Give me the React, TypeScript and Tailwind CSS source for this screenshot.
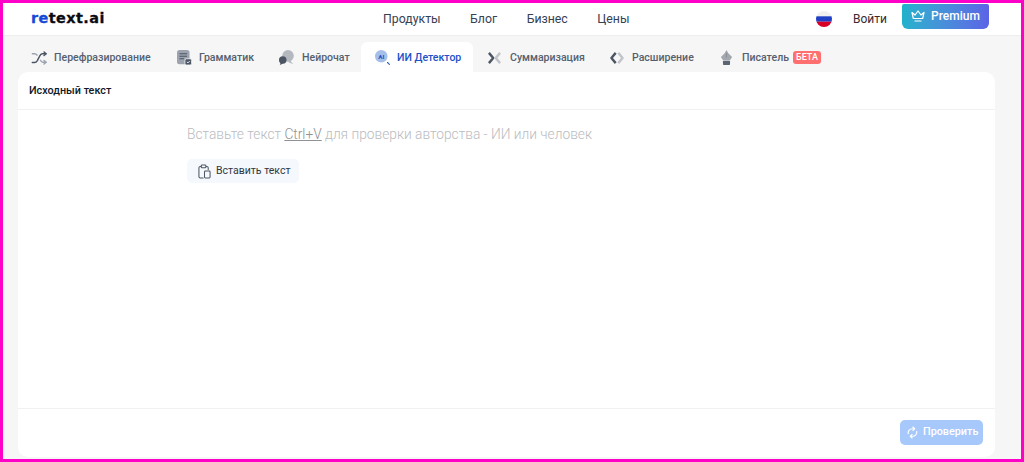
import React from "react";

const Shuffle = () => (
  <svg width="17" height="14" viewBox="0 0 26 20" fill="none" strokeWidth="2.200" strokeLinecap="round" strokeLinejoin="round">
    <path d="M2 17h3.500c2 0 3-1 4.200-3L13 7.500C14.200 4.800 15.500 3.500 17.500 3.500H23" stroke="#4b5563" />
    <path d="M20 .8 23 3.500l-3 2.700" stroke="#4b5563" />
    <path d="M2 3.500h3.500c1.700 0 2.800.8 3.800 2.200M14.500 13.500c1 2 2 3 3.700 3H23" stroke="#9ca3af" />
    <path d="M20 13.800 23 16.500l-3 2.700" stroke="#9ca3af" />
  </svg>
);
const Doc = () => (
  <svg width="15" height="15" viewBox="0 0 18 18">
    <rect x="0" y="0" width="15" height="17" rx="3" fill="#9ca3af" />
    <path d="M3 4.500h9M3 7.500h9M3 10.500h5.500" stroke="#4b5563" strokeWidth="1.300" />
    <rect x="9.500" y="10.500" width="8" height="7.500" rx="1.800" fill="#4b5563" stroke="#f5f5f6" />
    <path d="m11.800 14.200 1.400 1.300 2.200-2.400" stroke="#fff" strokeWidth="1" fill="none" />
  </svg>
);
const Chat = () => (
  <svg width="15" height="15" viewBox="0 0 18 18">
    <circle cx="10.800" cy="7" r="7" fill="#b4b8bf" />
    <path d="M13 12l4 5-6-2.500z" fill="#b4b8bf" />
    <circle cx="4.500" cy="12" r="4.500" fill="#4b5563" />
    <path d="M2 15l-1 3 4-1.700z" fill="#4b5563" />
  </svg>
);
const AiIcon = () => (
  <svg width="15" height="15" viewBox="0 0 18 18">
    <circle cx="7.500" cy="7.500" r="7.500" fill="#a5bfea" />
    <path d="m15 15 2.300 2.300" stroke="#2563c9" strokeWidth="1.300" strokeLinecap="round" />
    <text x="7.500" y="10.200" textAnchor="middle" fontSize="7.500" fontWeight="700" fill="#1d4fc0" fontFamily="Roboto, sans-serif">AI</text>
  </svg>
);
const Collapse = () => (
  <svg width="15" height="12" viewBox="0 0 16 14" fill="none" strokeWidth="2.800" strokeLinejoin="round">
    <path d="m1.500 1 5 6-5 6" stroke="#4b5563" />
    <path d="m14.500 1-5 6 5 6" stroke="#c1c4c9" />
  </svg>
);
const Expand = () => (
  <svg width="16" height="12" viewBox="0 0 16 14" fill="none" strokeWidth="2.800" strokeLinejoin="round">
    <path d="M6.500 1 1.500 7l5 6" stroke="#4b5563" />
    <path d="m9.500 1 5 6-5 6" stroke="#c1c4c9" />
  </svg>
);
const Pen = () => (
  <svg width="13" height="15" viewBox="0 0 14 16">
    <path d="M7 0 9 3.500 13 7.500 10.800 11H3.200L1 7.500 5 3.500z" fill="#a3a7ae" />
    <path d="M7 3v5" stroke="#7d828a" strokeWidth=".7" />
    <rect x="3.200" y="11.500" width="7.600" height="4.500" rx=".8" fill="#5b6470" />
  </svg>
);
const Flag = () => (
  <svg width="16" height="16" viewBox="0 0 16 16">
    <clipPath id="flagClip"><circle cx="8" cy="8" r="8" /></clipPath>
    <g clipPath="url(#flagClip)">
      <rect width="16" height="5.500" fill="#f0f0f0" />
      <rect y="5.300" width="16" height="5.400" fill="#1f3fc4" />
      <rect y="10.700" width="16" height="5.300" fill="#d80027" />
    </g>
  </svg>
);
const Crown = () => (
  <svg width="14" height="12" viewBox="0 0 14 12" fill="none" stroke="#fff" strokeWidth="1.200" strokeLinejoin="round" strokeLinecap="round">
    <path d="M1 2.500 4 5 7 1l3 4 3-2.500-1.300 6H2.300z" />
    <path d="M4 11h6" />
  </svg>
);
const Clip = () => (
  <svg width="13" height="15" viewBox="0 0 14 16" fill="none" stroke="#4b5563" strokeWidth="1.100" strokeLinejoin="round">
    <path d="M3.500 2.500H2.500A1.500 1.500 0 0 0 1 4v9.500A1.500 1.500 0 0 0 2.500 15H6" />
    <path d="M8.500 2.500h1A1.500 1.500 0 0 1 11 4v2.500" />
    <rect x="3.500" y="1" width="5" height="3" rx=".8" />
    <rect x="7" y="7.500" width="6" height="7.500" rx="1" />
  </svg>
);
const Refresh = () => (
  <svg width="11" height="13" viewBox="0 0 14 16" fill="none" stroke="#fff" strokeWidth="1.500" strokeLinecap="round" strokeLinejoin="round">
    <path d="M1.500 9.500A5.500 5.500 0 0 1 7 3.200h2" />
    <path d="M12.500 6.500A5.500 5.500 0 0 1 7 12.800H5" />
    <path d="M7.500 1 9.800 3.200 7.500 5.400M6.500 10.600 4.200 12.800 6.500 15" />
  </svg>
);

type T = { label: string; icon: React.ReactNode; cls: string; badge?: boolean };

const tabs: T[] = [
  { label: "Перефразирование", icon: <Shuffle />, cls: "w-[146px] pl-[13px] gap-[6px]" },
  { label: "Грамматик", icon: <Doc />, cls: "w-[102px] pl-[13px] gap-[7px]" },
  { label: "Нейрочат", icon: <Chat />, cls: "w-[95px] pl-[13px] gap-[8px]" },
];
const tabs2: T[] = [
  { label: "Суммаризация", icon: <Collapse />, cls: "w-[122px] pl-[14px] gap-[8px]" },
  { label: "Расширение", icon: <Expand />, cls: "w-[111px] pl-[14px] gap-[7px]" },
  { label: "Писатель", icon: <Pen />, cls: "pl-[14px] gap-[9px]", badge: true },
];

function Tab({ t }: { t: T }) {
  return (
    <div className={`flex items-center h-[30px] mt-[6px] pt-[1px] shrink-0 text-[10.550px] font-medium text-[#55606e] ${t.cls}`}>
      <span className="shrink-0 flex items-center justify-center">{t.icon}</span>
      <span>{t.label}</span>
      {t.badge && (
        <span className="-ml-[5px] bg-[#ff6f6f] text-white text-[9px] font-medium leading-[13px] px-[3px] rounded-[3px]">БЕТА</span>
      )}
    </div>
  );
}

export default function App() {
  return (
    <div className="w-[1024px] h-[462px] border-[3px] border-[#ff00c8] bg-[#f6f6f7] flex flex-col overflow-hidden font-['Roboto',sans-serif]">
      <header className="h-[33px] shrink-0 bg-white border-b border-[#eeeeef] flex items-center">
        <div className="w-[380px] pl-[28px] font-['DejaVu_Sans',sans-serif] font-bold text-[14.400px] tracking-[0.45px] [-webkit-text-stroke:0.3px] text-[#0b0b14]">
          <span className="text-[#1648d8]">re</span>text.ai
        </div>
        <nav className="flex items-center text-[12.300px] text-[#374151] gap-[29.500px]">
          <span>Продукты</span>
          <span>Блог</span>
          <span>Бизнес</span>
          <span>Цены</span>
        </nav>
        <div className="ml-auto flex items-center pr-[32px]">
          <Flag />
          <span className="ml-[21px] text-[12px] text-[#3a2a30]">Войти</span>
          <div className="ml-[15px] w-[87px] h-[25px] -mt-[6px] rounded-b-[6px] rounded-t-[2px] bg-gradient-to-r from-[#1fb2cc] to-[#5b63e6] flex items-center pl-[9px] gap-[6px] text-white text-[12px] font-medium">
            <Crown />
            <span>Premium</span>
          </div>
        </div>
      </header>

      <div className="pl-[15px] pr-[26px] flex-1 flex flex-col min-h-0">
        <div className="flex h-[36px] shrink-0">
          {tabs.map((t) => <Tab key={t.label} t={t} />)}
          <div className="w-[112px] h-[30px] mt-[6px] pt-[1px] shrink-0 bg-white rounded-t-[6px] flex items-center pl-[14px] gap-[7px] text-[10.550px] font-medium text-[#2151c8]">
            <AiIcon />
            <span>ИИ Детектор</span>
          </div>
          {tabs2.map((t) => <Tab key={t.label} t={t} />)}
        </div>

        <main className="flex-1 min-h-0 mb-[2px] bg-white rounded-[10px] flex flex-col">
          <div className="h-[38px] pt-[1px] shrink-0 border-b border-[#f1f1f2] flex items-center pl-[11px] text-[10.800px] font-medium text-[#111827]">
            Исходный текст
          </div>
          <div className="flex-1 min-h-0 pl-[169px] pt-[14px]">
            <p className="text-[13.740px] leading-[20px] font-light text-[#b9bbc0]">
              Вставьте текст <span className="underline text-[#8f9196]">Ctrl+V</span> для проверки авторства - ИИ или человек
            </p>
            <div className="mt-[15px] w-[112px] h-[24px] rounded-[5px] bg-[#f5f8fd] flex items-center pl-[11px] gap-[5px] text-[10.500px] text-[#2f3742]">
              <Clip />
              <span>Вставить текст</span>
            </div>
          </div>
          <div className="h-[49px] shrink-0 border-t border-[#f1f1f2] flex items-start justify-end pr-[12px] pt-[11px]">
            <div className="w-[83px] h-[25px] rounded-[5px] bg-[#a6c8fb] flex items-center pl-[7px] gap-[5px] text-white text-[10.800px] font-medium">
              <Refresh />
              <span>Проверить</span>
            </div>
          </div>
        </main>
      </div>
    </div>
  );
}
